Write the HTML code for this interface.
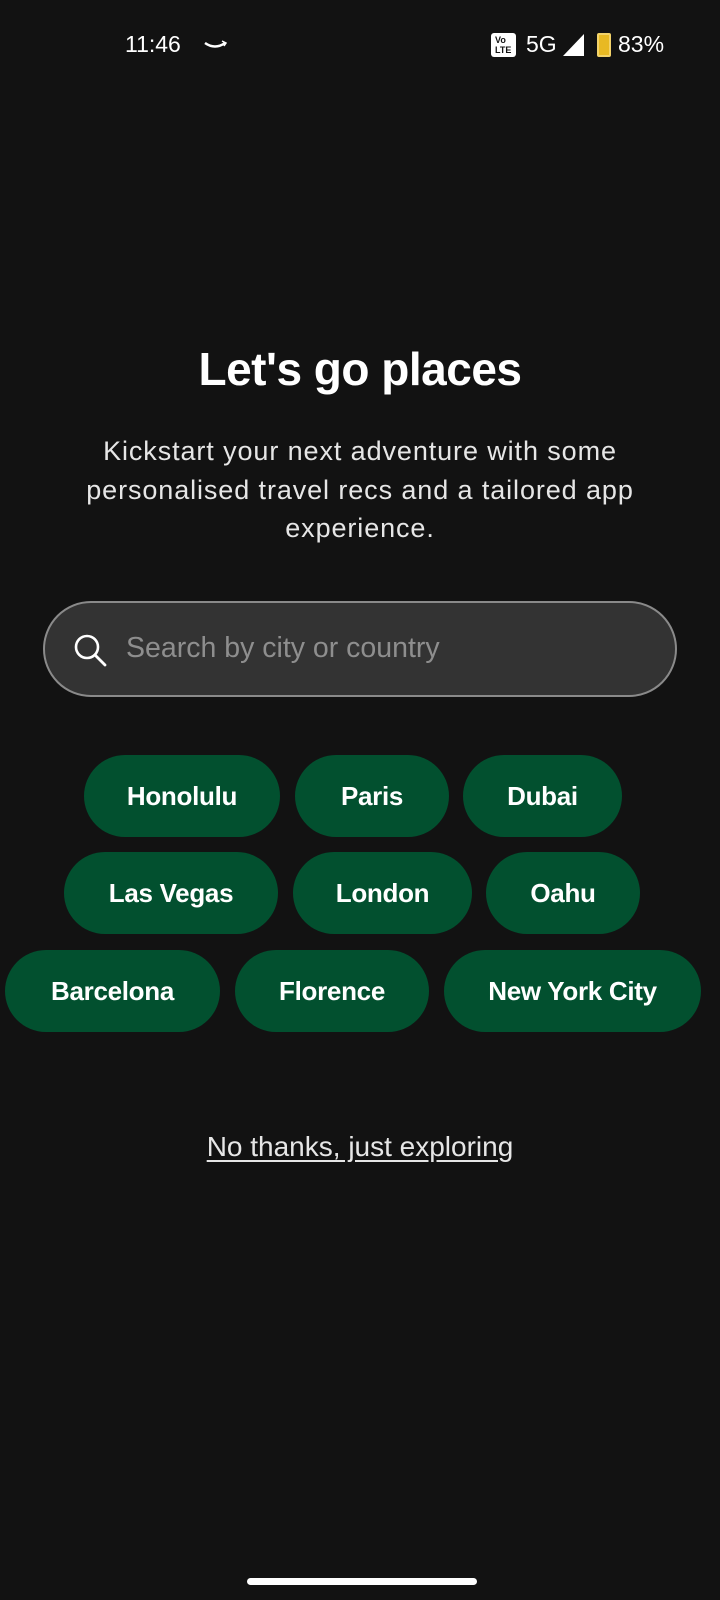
<!DOCTYPE html>
<html><head><meta charset="utf-8"><style>
*{margin:0;padding:0;box-sizing:border-box}
body{width:720px;height:1600px;background:#121212;font-family:"Liberation Sans",sans-serif;color:#fff;position:relative;overflow:hidden}
.abs{position:absolute}
.chip{position:absolute;height:82px;border-radius:41px;background:#02502f;display:flex;align-items:center;justify-content:center;font-size:26px;font-weight:bold;color:#fff;letter-spacing:-0.3px}
</style></head><body>
<div class="abs" style="left:125px;top:31px;font-size:23px">11:46</div>
<svg class="abs" style="left:203px;top:40px" width="26" height="10"><path d="M2 3 Q12 10 22 3" stroke="#fff" stroke-width="2.5" fill="none"/><path d="M19 1 L23 3 L21 6" stroke="#fff" stroke-width="1.5" fill="none"/></svg>
<div class="abs" style="left:491px;top:33px;width:25px;height:24px;background:#fff;border-radius:3px;color:#121212;font-size:9px;line-height:10px;padding:2px 0 0 4px;font-weight:bold">Vo<br>LTE</div>
<div class="abs" style="left:526px;top:31px;font-size:23px">5G</div>
<svg class="abs" style="left:563px;top:34px" width="22" height="22"><path d="M21 0 L21 22 L0 22 Z" fill="#fff"/></svg>
<div class="abs" style="left:597px;top:33px;width:14px;height:24px;background:#e8b923;border-radius:2px;border:2px solid #f3d36a"></div>
<div class="abs" style="left:618px;top:31px;font-size:23px">83%</div>

<div class="abs" style="left:0;width:720px;top:342px;text-align:center;font-size:46px;font-weight:bold;letter-spacing:-0.5px">Let's go places</div>
<div class="abs" style="left:0;width:720px;top:432px;text-align:center;font-size:27px;letter-spacing:0.9px;line-height:38.5px;color:#e6e6e6">Kickstart your next adventure with some<br>personalised travel recs and a tailored app<br>experience.</div>

<div class="abs" style="left:43px;top:601px;width:634px;height:96px;border-radius:48px;background:#333;border:2px solid #8a8a8a"></div>
<svg class="abs" style="left:72px;top:632px" width="36" height="36"><circle cx="15" cy="15" r="11" stroke="#fff" stroke-width="2.6" fill="none"/><path d="M23 23 L33 33" stroke="#fff" stroke-width="2.8" stroke-linecap="round"/></svg>
<div class="abs" style="left:126px;top:632px;font-size:28.5px;color:#8e8e8e">Search by city or country</div>

<div class="chip" style="left:84px;top:755px;width:196px">Honolulu</div>
<div class="chip" style="left:295px;top:755px;width:154px">Paris</div>
<div class="chip" style="left:463px;top:755px;width:159px">Dubai</div>
<div class="chip" style="left:64px;top:852px;width:214px">Las Vegas</div>
<div class="chip" style="left:293px;top:852px;width:179px">London</div>
<div class="chip" style="left:486px;top:852px;width:154px">Oahu</div>
<div class="chip" style="left:5px;top:950px;width:215px">Barcelona</div>
<div class="chip" style="left:235px;top:950px;width:194px">Florence</div>
<div class="chip" style="left:444px;top:950px;width:257px">New York City</div>

<div class="abs" style="left:0;width:720px;top:1131px;text-align:center;font-size:28px;color:#e6e6e6;text-decoration:underline;text-underline-offset:4px">No thanks, just exploring</div>
<div class="abs" style="left:247px;top:1578px;width:230px;height:7px;border-radius:4px;background:#fff"></div>
</body></html>
